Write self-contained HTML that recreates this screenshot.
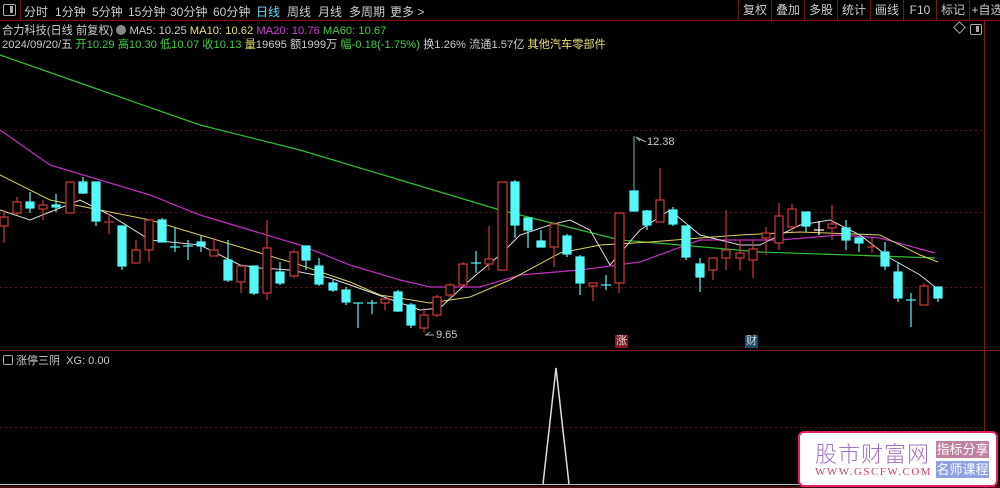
<!DOCTYPE html>
<html><head><meta charset="utf-8"><style>
body{margin:0;width:1000px;height:488px;background:#000;overflow:hidden;font-family:"Liberation Sans","Noto Sans CJK SC",sans-serif;}
.t{position:absolute;white-space:nowrap;font-size:12px;}
.n{position:absolute;top:3px;color:#ccc;font-size:12px;white-space:nowrap;}
</style></head><body>
<div style="position:relative;width:1000px;height:488px;">
<div class="t" style="left:0;top:0;width:1000px;height:20px;border-bottom:1px solid #7a1018;"></div>
<div class="t" style="left:3px;top:4px;width:11px;height:10px;border:1px solid #aaa;border-radius:2px;"></div>
<div class="t" style="left:10px;top:6px;width:3px;height:7px;background:#aaa;"></div>
<div class="t" style="left:20px;top:0;height:20px;border-left:1px solid #7a1018;"></div>
<span class="n" style="left:24px">分时</span>
<span class="n" style="left:55px">1分钟</span>
<span class="n" style="left:92px">5分钟</span>
<span class="n" style="left:128px">15分钟</span>
<span class="n" style="left:170px">30分钟</span>
<span class="n" style="left:213px">60分钟</span>
<span class="n" style="left:256px;color:#5ee0ff">日线</span>
<span class="n" style="left:287px">周线</span>
<span class="n" style="left:318px">月线</span>
<span class="n" style="left:349px">多周期</span>
<span class="n" style="left:390px">更多 &gt;</span>
<div class="t" style="left:738px;top:0;height:20px;display:flex;color:#ccc;font-size:12px;">
<span style="border-left:1px solid #7a1018;width:32px;text-align:center;line-height:20px">复权</span>
<span style="border-left:1px solid #7a1018;width:32px;text-align:center;line-height:20px">叠加</span>
<span style="border-left:1px solid #7a1018;width:32px;text-align:center;line-height:20px">多股</span>
<span style="border-left:1px solid #7a1018;width:32px;text-align:center;line-height:20px">统计</span>
<span style="border-left:1px solid #7a1018;width:32px;text-align:center;line-height:20px">画线</span>
<span style="border-left:1px solid #7a1018;width:32px;text-align:center;line-height:20px">F10</span>
<span style="border-left:1px solid #7a1018;width:32px;text-align:center;line-height:20px">标记</span>
<span style="border-left:1px solid #7a1018;width:34px;text-align:center;line-height:20px">+自选</span>
</div>
<div class="t" style="left:2px;top:22px;color:#ccc;font-size:11.2px;">合力科技(日线 前复权) <span style="display:inline-block;width:10px;height:10px;border-radius:5px;background:#888;vertical-align:-1px"></span> MA5: 10.25 <span style="color:#e8e070">MA10: 10.62</span> <span style="color:#d040d0">MA20: 10.76</span> <span style="color:#40d040">MA60: 10.67</span></div>
<div class="t" style="left:2px;top:36px;color:#ccc;font-size:11.2px;">2024/09/20/五 <span style="color:#40d040">开10.29 高10.30 低10.07 收10.13</span> <span style="color:#e8e070">量</span>19695 额1999万 <span style="color:#40d040">幅-0.18(-1.75%)</span> 换1.26% 流通1.57亿 <span style="color:#e8e070">其他汽车零部件</span></div>
<div class="t" style="left:955px;top:23px;width:7px;height:7px;border:1px solid #aaa;transform:rotate(45deg);"></div>
<div class="t" style="left:970px;top:24px;width:10px;height:9px;border:1px solid #aaa;border-radius:2px;"></div>
<div class="t" style="left:976px;top:26px;width:3px;height:6px;background:#aaa;"></div>

<svg width="1000" height="488" style="position:absolute;left:0;top:0">
<g stroke="#5a1015" stroke-dasharray="2,3" stroke-width="1">
<line x1="0" y1="130.5" x2="984" y2="130.5"/><line x1="0" y1="212.5" x2="984" y2="212.5"/><line x1="0" y1="287.5" x2="984" y2="287.5"/><line x1="0" y1="427.5" x2="984" y2="427.5"/>
</g>
<line x1="984.5" y1="20" x2="984.5" y2="488" stroke="#8a1820"/>
<line x1="0" y1="350.5" x2="1000" y2="350.5" stroke="#8a1820"/>
<line x1="0" y1="484.5" x2="984" y2="484.5" stroke="#bbb"/>
<line x1="0" y1="487" x2="1000" y2="487" stroke="#8a1820"/>
<polyline fill="none" stroke="#30c030" stroke-width="1.2" points="0,55 100,90 200,125 300,150 400,180 500,210 560,225 620,240 680,245 760,252 850,255 935,258"/>
<polyline fill="none" stroke="#c030c0" stroke-width="1.2" points="0,130 50,165 100,180 150,195 200,215 250,230 300,245 350,265 400,280 430,287 480,287 520,275 580,270 640,262 700,240 780,240 840,235 880,238 935,253"/>
<polyline fill="none" stroke="#d8d060" stroke-width="1" points="0,175 50,200 100,210 150,220 200,235 250,250 300,265 350,282 380,295 430,303 470,297 510,280 560,253 600,245 650,242 700,238 740,235 800,232 880,235 920,255 938,262"/>
<polyline fill="none" stroke="#ddd" stroke-width="1" points="0,210 30,220 60,208 80,200 110,215 150,240 200,245 240,265 260,268 290,270 330,278 370,292 420,310 440,308 470,280 500,255 520,235 550,225 570,220 590,230 610,265 640,230 670,210 700,235 740,245 760,245 800,225 830,220 860,235 890,258 920,275 935,287"/>
<g stroke="#d03838" fill="#000" stroke-width="1.2">
<line x1="4" y1="210" x2="4" y2="243"/><rect x="0" y="217" width="8" height="9"/>
<line x1="17" y1="197" x2="17" y2="215"/><rect x="13" y="202" width="8" height="11"/>
<line x1="43" y1="200" x2="43" y2="220"/><rect x="39" y="205" width="8" height="4"/>
<line x1="70" y1="182" x2="70" y2="213"/><rect x="66" y="182" width="8" height="31"/>
<line x1="109" y1="214" x2="109" y2="234"/><line x1="104" y1="222" x2="114" y2="222"/>
<line x1="136" y1="240" x2="136" y2="263"/><rect x="132" y="250" width="8" height="13"/>
<line x1="149" y1="220" x2="149" y2="262"/><rect x="145" y="220" width="8" height="30"/>
<line x1="214" y1="238" x2="214" y2="256"/><rect x="210" y="250" width="8" height="6"/>
<line x1="241" y1="265" x2="241" y2="293"/><rect x="237" y="266" width="8" height="16"/>
<line x1="267" y1="220" x2="267" y2="300"/><rect x="263" y="248" width="8" height="45"/>
<line x1="294" y1="250" x2="294" y2="278"/><rect x="290" y="252" width="8" height="24"/>
<line x1="385" y1="298" x2="385" y2="310"/><rect x="381" y="299" width="8" height="4"/>
<line x1="424" y1="308" x2="424" y2="332"/><rect x="420" y="315" width="8" height="13"/>
<line x1="437" y1="295" x2="437" y2="317"/><rect x="433" y="297" width="8" height="18"/>
<line x1="450" y1="283" x2="450" y2="297"/><rect x="446" y="285" width="8" height="10"/>
<line x1="463" y1="262" x2="463" y2="287"/><rect x="459" y="264" width="8" height="21"/>
<line x1="489" y1="226" x2="489" y2="270"/><rect x="485" y="259" width="8" height="5"/>
<rect x="498" y="182" width="9" height="88"/>
<line x1="554" y1="222" x2="554" y2="267"/><rect x="550" y="224" width="8" height="23"/>
<line x1="593" y1="283" x2="593" y2="301"/><rect x="589" y="283" width="8" height="3"/>
<line x1="619" y1="213" x2="619" y2="293"/><rect x="615" y="213" width="9" height="70"/>
<line x1="660" y1="168" x2="660" y2="222"/><rect x="656" y="200" width="8" height="22"/>
<line x1="713" y1="258" x2="713" y2="280"/><rect x="709" y="258" width="8" height="12"/>
<line x1="726" y1="210" x2="726" y2="270"/><rect x="722" y="250" width="8" height="8"/>
<line x1="740" y1="240" x2="740" y2="270"/><rect x="736" y="253" width="8" height="5"/>
<line x1="753" y1="240" x2="753" y2="278"/><rect x="749" y="249" width="8" height="11"/>
<line x1="766" y1="227" x2="766" y2="255"/><rect x="762" y="233" width="8" height="5"/>
<line x1="779" y1="203" x2="779" y2="250"/><rect x="775" y="216" width="8" height="27"/>
<line x1="792" y1="204" x2="792" y2="232"/><rect x="788" y="209" width="8" height="18"/>
<line x1="832" y1="205" x2="832" y2="240"/><rect x="828" y="224" width="8" height="4"/>
<line x1="872" y1="238" x2="872" y2="253"/><line x1="867" y1="247" x2="877" y2="247"/>
<line x1="924" y1="283" x2="924" y2="305"/><rect x="920" y="286" width="8" height="19"/>
</g>
<g stroke="#54f8f8" fill="#54f8f8" stroke-width="1.2">
<line x1="30" y1="192" x2="30" y2="213"/><rect x="26" y="202" width="8" height="6"/>
<line x1="56" y1="194" x2="56" y2="212"/><rect x="52" y="205" width="8" height="2"/>
<line x1="83" y1="177" x2="83" y2="194"/><rect x="79" y="182" width="8" height="11"/>
<line x1="96" y1="182" x2="96" y2="226"/><rect x="92" y="182" width="8" height="39"/>
<line x1="122" y1="226" x2="122" y2="270"/><rect x="118" y="226" width="8" height="40"/>
<line x1="162" y1="218" x2="162" y2="242"/><rect x="158" y="220" width="8" height="22"/>
<line x1="175" y1="228" x2="175" y2="252"/><line x1="170" y1="247" x2="180" y2="247"/>
<line x1="188" y1="240" x2="188" y2="260"/><line x1="183" y1="246" x2="193" y2="246"/>
<line x1="201" y1="236" x2="201" y2="252"/><rect x="197" y="242" width="8" height="4"/>
<line x1="228" y1="240" x2="228" y2="282"/><rect x="224" y="260" width="8" height="20"/>
<line x1="254" y1="266" x2="254" y2="295"/><rect x="250" y="266" width="8" height="27"/>
<line x1="280" y1="262" x2="280" y2="285"/><rect x="276" y="272" width="8" height="11"/>
<line x1="306" y1="246" x2="306" y2="270"/><rect x="302" y="246" width="8" height="14"/>
<line x1="319" y1="258" x2="319" y2="286"/><rect x="315" y="266" width="8" height="18"/>
<line x1="333" y1="280" x2="333" y2="292"/><rect x="329" y="283" width="8" height="7"/>
<line x1="346" y1="287" x2="346" y2="305"/><rect x="342" y="290" width="8" height="12"/>
<line x1="358" y1="303" x2="358" y2="328"/><line x1="353" y1="303" x2="363" y2="303"/>
<line x1="372" y1="300" x2="372" y2="314"/><line x1="367" y1="303" x2="377" y2="303"/>
<line x1="398" y1="290" x2="398" y2="312"/><rect x="394" y="292" width="8" height="19"/>
<line x1="411" y1="303" x2="411" y2="328"/><rect x="407" y="305" width="8" height="20"/>
<line x1="476" y1="251" x2="476" y2="273"/><line x1="471" y1="263" x2="481" y2="263"/>
<line x1="515" y1="180" x2="515" y2="238"/><rect x="511" y="182" width="8" height="43"/>
<line x1="528" y1="218" x2="528" y2="248"/><rect x="524" y="218" width="8" height="12"/>
<line x1="541" y1="230" x2="541" y2="247"/><rect x="537" y="241" width="8" height="6"/>
<line x1="567" y1="234" x2="567" y2="257"/><rect x="563" y="236" width="8" height="18"/>
<line x1="580" y1="255" x2="580" y2="295"/><rect x="576" y="257" width="8" height="26"/>
<line x1="606" y1="275" x2="606" y2="290"/><line x1="601" y1="285" x2="611" y2="285"/>
<line x1="634" y1="136" x2="634" y2="212" stroke="#5a9a9a"/><rect x="630" y="191" width="8" height="20"/>
<line x1="647" y1="210" x2="647" y2="230"/><rect x="643" y="211" width="8" height="14"/>
<line x1="673" y1="207" x2="673" y2="226"/><rect x="669" y="210" width="8" height="14"/>
<line x1="686" y1="226" x2="686" y2="260"/><rect x="682" y="226" width="8" height="31"/>
<line x1="700" y1="258" x2="700" y2="292"/><rect x="696" y="264" width="8" height="13"/>
<line x1="806" y1="212" x2="806" y2="232"/><rect x="802" y="212" width="8" height="14"/>
<line x1="846" y1="220" x2="846" y2="250"/><rect x="842" y="228" width="8" height="12"/>
<line x1="859" y1="237" x2="859" y2="252"/><rect x="855" y="238" width="8" height="5"/>
<line x1="885" y1="242" x2="885" y2="270"/><rect x="881" y="252" width="8" height="14"/>
<line x1="898" y1="262" x2="898" y2="302"/><rect x="894" y="272" width="8" height="26"/>
<line x1="911" y1="293" x2="911" y2="327"/><line x1="906" y1="300" x2="916" y2="300"/>
<line x1="938" y1="287" x2="938" y2="302"/><rect x="934" y="287" width="8" height="11"/>
</g>
<g stroke="#fff" stroke-width="1.2"><line x1="819" y1="221" x2="819" y2="235"/><line x1="814" y1="230" x2="824" y2="230"/></g>
<polyline points="543,484 556,368 569,484" fill="none" stroke="#ddd" stroke-width="1.5"/>
<polyline points="640,141 636,137 646,142" fill="none" stroke="#aaa"/>
<polyline points="430,332 426,335 434,335" fill="none" stroke="#aaa"/>
</svg>
<div class="t" style="left:647px;top:136px;color:#ccc;font-size:11px;">12.38</div>
<div class="t" style="left:436px;top:329px;color:#ccc;font-size:11px;">9.65</div>
<div class="t" style="left:615px;top:335px;background:#801820;color:#ddd;font-size:11px;line-height:13px;padding:0 1px;">涨</div>
<div class="t" style="left:745px;top:335px;background:#1a4868;color:#ddd;font-size:11px;line-height:13px;padding:0 1px;">财</div>
<div class="t" style="left:3px;top:352px;color:#ccc;font-size:11px;"><span style="display:inline-block;width:8px;height:8px;border:1px solid #aaa;border-radius:2px;vertical-align:-1px"></span> 涨停三阴&nbsp; XG: 0.00</div>
<div class="t" style="left:798px;top:431px;width:196px;height:52px;background:#fff;border:2px solid #e8206a;border-radius:6px;"></div>
<div class="t" style="left:815px;top:437px;color:#a070c8;font-size:22px;font-family:'Noto Sans CJK SC',sans-serif;letter-spacing:1px;font-weight:300;">股市财富网</div>
<div class="t" style="left:815px;top:466px;color:#d04060;font-size:11px;font-family:'Liberation Serif',serif;letter-spacing:1.5px;">WWW.GSCFW.COM</div>
<div class="t" style="left:936px;top:441px;width:53px;height:17px;background:#c080a0;color:#fff;font-size:13px;line-height:17px;text-align:center;">指标分享</div>
<div class="t" style="left:936px;top:461px;width:53px;height:17px;background:#90a0e8;color:#fff;font-size:13px;line-height:17px;text-align:center;">名师课程</div>
</div>
</body></html>
